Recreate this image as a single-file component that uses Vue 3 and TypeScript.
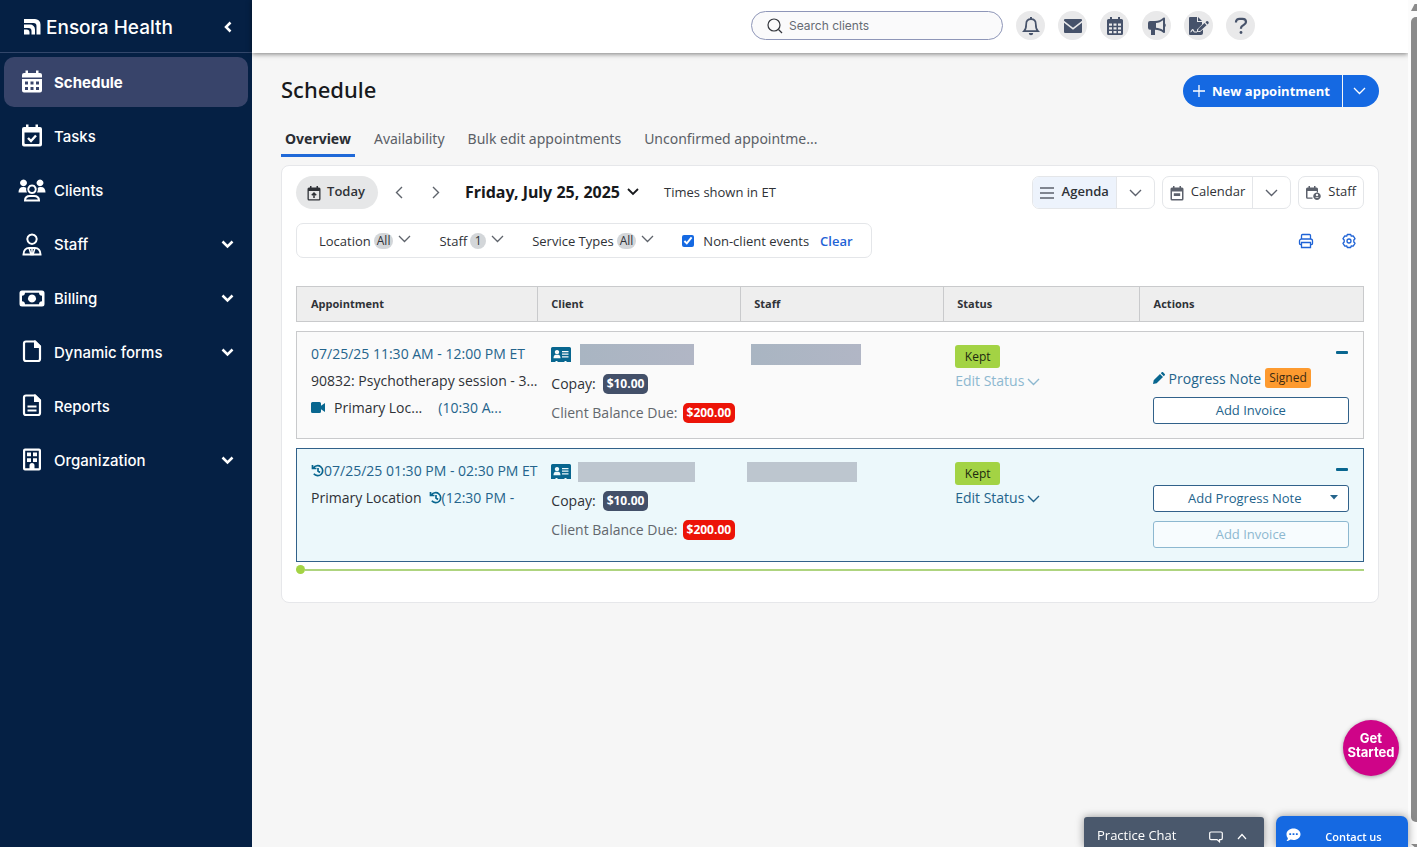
<script setup lang="ts">
import { ref } from 'vue'

interface Shape {
  d: string
  stroke?: number
}

interface NavItem {
  label: string
  expandable?: boolean
  shapes: Shape[]
}

interface Appointment {
  id: number
  time: string
  service?: string
  place: string
  altTime: string
  video?: boolean
  recurring?: boolean
  current?: boolean
  signed?: boolean
}

const navItems: NavItem[] = [
  {
    label: 'Schedule',
    shapes: [
      {
        d: 'M7.5 0.500h2.500v2.500h8V0.500h2.500v2.500H22a2 2 0 0 1 2 2V7.500H4V5a2 2 0 0 1 2-2h1.500zM4 9h20V20.500a2 2 0 0 1-2 2H6a2 2 0 0 1-2-2zM7 11.500v3h3v-3zM12.500 11.500v3h3v-3zM18 11.500v3h3v-3zM7 17v3h3v-3zM12.500 17v3h3v-3zM18 17v3h3v-3z',
      },
    ],
  },
  {
    label: 'Tasks',
    shapes: [
      { d: 'M8 .500h2.500v2.500h7V.500H20v2.500h2a2 2 0 0 1 2 2V20.500a2 2 0 0 1-2 2H6a2 2 0 0 1-2-2V5a2 2 0 0 1 2-2h2zM6.500 8.500v10.500a1 1 0 0 0 1 1h13a1 1 0 0 0 1-1V8.500z' },
      { d: 'M10 14l3 3 5-5.500', stroke: 2.4 },
    ],
  },
  {
    label: 'Clients',
    shapes: [
      { d: 'M5.500 1.500a3.400 3.400 0 1 0 .01 0zM22 1.500a3.400 3.400 0 1 0 .01 0zM.500 14.500c0-3.500 1.500-5.500 4.500-5.500 1.500 0 2.500.3 3.300 1-.4 1.700-.1 3.200.7 4.500zM27.500 14.500c0-3.500-1.500-5.500-4.500-5.500-1.500 0-2.500.3-3.300 1 .4 1.700.1 3.200-.7 4.500z' },
      { d: 'M14 7.500a3.800 3.800 0 1 0 .01 0zM7 22.500c0-3.500 2.500-4.500 5-4.500h4c2.500 0 5 1 5 4.500z', stroke: 2 },
    ],
  },
  {
    label: 'Staff',
    expandable: true,
    shapes: [
      { d: 'M14 2.500a4.700 4.700 0 1 0 .01 0zM5.500 22.500c0-4 2.500-6.500 5.500-6.500h6c3 0 5.500 2.500 5.500 6.500z', stroke: 2 },
      { d: 'M11 16l2 6.500h2l2-6.500M14 15.500v7', stroke: 1.5 },
    ],
  },
  {
    label: 'Billing',
    expandable: true,
    shapes: [
      { d: 'M4 4.500h20a2.500 2.500 0 0 1 2.500 2.500v11a2.500 2.500 0 0 1-2.500 2.500H4A2.500 2.500 0 0 1 1.500 18V7A2.500 2.500 0 0 1 4 4.500zM7 6.700c0 2-1.200 3-3 3v5.600c1.800 0 3 1 3 3h14c0-2 1.200-3 3-3V9.700c-1.800 0-3-1-3-3zM14 8.500a4 4 0 1 1-.01 0z' },
    ],
  },
  {
    label: 'Dynamic forms',
    expandable: true,
    shapes: [
      { d: 'M8 1.500H17l5 5v12.500a2 2 0 0 1-2 2H8a2 2 0 0 1-2-2v-15.500A2 2 0 0 1 8 1.500z', stroke: 2.2 },
      { d: 'M16 .500h1.500L23 6V8h-7z' },
    ],
  },
  {
    label: 'Reports',
    shapes: [
      { d: 'M8 1.500H17l5 5v12.500a2 2 0 0 1-2 2H8a2 2 0 0 1-2-2v-15.500A2 2 0 0 1 8 1.500zM9.500 12.500h9M9.500 16.500h9', stroke: 2.2 },
      { d: 'M16 .500h1.500L23 6V8h-7z' },
    ],
  },
  {
    label: 'Organization',
    expandable: true,
    shapes: [
      { d: 'M7 0.500h14a2 2 0 0 1 2 2v18a2 2 0 0 1-2 2H7a2 2 0 0 1-2-2v-18a2 2 0 0 1 2-2zM7.200 2.700v17.600H11.500V17.500a2.500 2.500 0 0 1 5 0v2.800h4.300V2.700z' },
      { d: 'M9 4.500h4v3.800H9zM15 4.500h4v3.800h-4zM9 10.300h4v3.800H9zM15 10.300h4v3.800h-4z' },
    ],
  },
]

const tabs = ['Overview', 'Availability', 'Bulk edit appointments', 'Unconfirmed appointme...']
const columns = ['Appointment', 'Client', 'Staff', 'Status', 'Actions']
const filters = [
  { label: 'Location', count: 'All' },
  { label: 'Staff', count: '1' },
  { label: 'Service Types', count: 'All' },
]

const appointments: Appointment[] = [
  {
    id: 1,
    time: '07/25/25 11:30 AM - 12:00 PM ET',
    service: '90832: Psychotherapy session - 3...',
    place: 'Primary Loc...',
    altTime: '(10:30 A...',
    video: true,
    signed: true,
  },
  {
    id: 2,
    time: '07/25/25 01:30 PM - 02:30 PM ET',
    place: 'Primary Location',
    altTime: '(12:30 PM -',
    recurring: true,
    current: true,
  },
]

const activeNav = ref('Schedule')
const activeTab = ref('Overview')
const nonClient = ref(true)
const search = ref('')
</script>

<template>
  <div class="app">
    <aside class="sidebar">
      <div class="brand">
        <svg class="brand-mark" viewBox="0 0 17 16" width="17" height="16">
          <path d="M0 0h11a5.500 5.500 0 0 1 5.500 5.500V15.500h-4V7A3 3 0 0 0 9.500 4H0z" />
          <path d="M0 5.500h6a5 5 0 0 1 5 5v5H7.500v-3.500A3 3 0 0 0 4.500 9H0z" />
          <path d="M0 10.500h2.500a3 3 0 0 1 3 3v2H0z" />
        </svg>
        <span class="brand-name">Ensora Health</span>
        <button class="collapse" type="button" aria-label="Collapse menu">
          <svg viewBox="0 0 10 12" width="10" height="12"><path d="M7.500 1.500L3 6l4.500 4.500" /></svg>
        </button>
      </div>
      <nav class="nav">
        <button
          v-for="item in navItems"
          :key="item.label"
          type="button"
          class="nav-item"
          :class="{ active: item.label === activeNav }"
          @click="activeNav = item.label"
        >
          <svg class="nav-icon" viewBox="0 0 28 24" width="28" height="24">
            <path
              v-for="(shape, i) in item.shapes"
              :key="i"
              :d="shape.d"
              fill-rule="evenodd"
              :fill="shape.stroke ? 'none' : 'currentColor'"
              :stroke="shape.stroke ? 'currentColor' : 'none'"
              :stroke-width="shape.stroke"
            />
          </svg>
          <span class="nav-label">{{ item.label }}</span>
          <svg v-if="item.expandable" class="nav-arrow" viewBox="0 0 13 9" width="13" height="9">
            <path d="M1.500 1.500l5 5 5-5" />
          </svg>
        </button>
      </nav>
    </aside>

    <div class="page">
      <header class="topbar">
        <label class="search">
          <svg viewBox="0 0 16 16" width="16" height="16">
            <circle cx="7" cy="7" r="6" />
            <path d="M11.500 11.500L15 15" />
          </svg>
          <input v-model="search" type="text" placeholder="Search clients" aria-label="Search clients" />
        </label>
        <button class="round" type="button" aria-label="Notifications">
          <svg viewBox="0 0 18 20" width="18" height="20">
            <path class="line" d="M2 15.200h14c-1.800-1.800-2.200-3.500-2.200-7 0-3-1.800-5-4.800-5s-4.800 2-4.800 5c0 3.500-.4 5.200-2.200 7z" />
            <path d="M8 1h2v2H8zM6.800 17h4.400a2.200 2.200 0 0 1-4.400 0z" />
          </svg>
        </button>
        <button class="round" type="button" aria-label="Messages">
          <svg viewBox="0 0 20 16" width="20" height="16">
            <path d="M2 1h16a1 1 0 0 1 1 1v.8l-9 7-9-7V2a1 1 0 0 1 1-1zM1 4.800l9 7 9-7V14a1 1 0 0 1-1 1H2a1 1 0 0 1-1-1z" />
          </svg>
        </button>
        <button class="round" type="button" aria-label="Calendar">
          <svg viewBox="0 0 18 20" width="18" height="20">
            <path
              fill-rule="evenodd"
              d="M4 1h2v2h6V1h2v2h1.500A1.500 1.500 0 0 1 17 4.500v13a1.500 1.500 0 0 1-1.500 1.500h-13A1.500 1.500 0 0 1 1 17.500v-13A1.500 1.500 0 0 1 2.500 3H4zM3 7.500v2.200h3V7.500zM7.500 7.500v2.200h3V7.500zM12 7.500v2.200h3V7.500zM3 11.200v2.200h3v-2.200zM7.500 11.200v2.200h3v-2.200zM12 11.200v2.200h3v-2.200zM3 15v2.200h3V15zM7.500 15v2.200h3V15zM12 15v2.200h3V15z"
            />
          </svg>
        </button>
        <button class="round" type="button" aria-label="Announcements">
          <svg viewBox="0 0 20 20" width="20" height="20">
            <path
              fill-rule="evenodd"
              d="M17 1.500c.6 0 1 .4 1 1v5c1 .3 1 3.200 0 3.500v5c0 1-1 1.300-1.700.8C13.500 14.500 11.500 14 8 13.800V19H4v-5.200H3a2 2 0 0 1-2-2V7a2 2 0 0 1 2-2h5c3.500 0 5.800-1 8.300-3.200zM9 7v4.800c2.500.2 4.800.8 7 2.200V4.300C14 6 11.500 6.800 9 7z"
            />
          </svg>
        </button>
        <button class="round" type="button" aria-label="Sign documents">
          <svg viewBox="0 0 22 20" width="22" height="20">
            <path d="M2 1h7v5h5v2.500l-5 5V16h3l3-2.500V17a2 2 0 0 1-2 2H2a1 1 0 0 1-1-1V2a1 1 0 0 1 1-1zM10 1l4 4h-4z" />
            <path d="M10.500 12.500l6-5.500 2 2.200-6 5.500-2.600.6zM17.500 6.200l1-1c1-.7 3 1 2 2.200l-1 1z" />
            <path class="scribble" d="M2.500 16c1 0 1.500-2.500 2.200-2.500S5.500 16 6.500 16H9" />
          </svg>
        </button>
        <button class="round" type="button" aria-label="Help">
          <svg viewBox="0 0 14 18" width="14" height="18">
            <path class="thick" d="M2 5.500V5c0-2 1.500-3.200 3.500-3.200h3C10.500 1.800 12 3 12 5c0 3-5 3.200-5 6v.8" />
            <circle cx="7" cy="15.500" r="1.400" />
          </svg>
        </button>
      </header>

      <main class="content">
        <div class="title-row">
          <h1>Schedule</h1>
          <div class="new-group">
            <button class="new-main" type="button">
              <svg viewBox="0 0 12 12" width="12" height="12"><path d="M6 0v12M0 6h12" /></svg>
              New appointment
            </button>
            <button class="new-more" type="button" aria-label="More appointment options">
              <svg viewBox="0 0 13 8" width="13" height="8"><path d="M1 1l5.500 5.500L12 1" /></svg>
            </button>
          </div>
        </div>

        <div class="tabs" role="tablist">
          <button
            v-for="tab in tabs"
            :key="tab"
            type="button"
            role="tab"
            :aria-selected="tab === activeTab"
            :class="{ active: tab === activeTab }"
            @click="activeTab = tab"
          >
            {{ tab }}
          </button>
        </div>

        <section class="card">
          <div class="toolbar">
            <button class="today" type="button">
              <svg viewBox="0 0 14 16" width="14" height="16">
                <path fill-rule="evenodd" d="M3 1h1.500v1.500h5V1H11v1.500h1A1.500 1.500 0 0 1 13.500 4v10a1.500 1.500 0 0 1-1.500 1.500H2A1.500 1.500 0 0 1 .500 14V4A1.500 1.500 0 0 1 2 2.500h1zM1.800 6v8.200h10.400V6z" />
                <path class="line" d="M7 13V8.500M4.800 10.200L7 8l2.200 2.200" />
              </svg>
              <span class="caption">Today</span>
            </button>
            <button class="step" type="button" aria-label="Previous day">
              <svg viewBox="0 0 8 13" width="8" height="13"><path d="M7 1L1.500 6.500 7 12" /></svg>
            </button>
            <button class="step" type="button" aria-label="Next day">
              <svg viewBox="0 0 8 13" width="8" height="13"><path d="M1 1l5.500 5.500L1 12" /></svg>
            </button>
            <button class="date" type="button">
              Friday, July 25, 2025
              <svg viewBox="0 0 12 8" width="12" height="8"><path d="M1 1l5 5 5-5" /></svg>
            </button>
            <span class="zone">Times shown in ET</span>
            <div class="views">
              <div class="view on">
                <button class="view-main" type="button">
                  <svg viewBox="0 0 14 14" width="14" height="14"><path class="line" d="M0 2h14M0 7h14M0 12h14" /></svg>
                  <span class="caption">Agenda</span>
                </button>
                <button class="view-more" type="button" aria-label="Agenda options">
                  <svg viewBox="0 0 13 8" width="13" height="8"><path class="line" d="M1 1l5.500 5.500L12 1" /></svg>
                </button>
              </div>
              <div class="view">
                <button class="view-main" type="button">
                  <svg viewBox="0 0 14 16" width="14" height="16">
                    <path fill-rule="evenodd" d="M3 1h1.500v1.500h5V1H11v1.500h1A1.500 1.500 0 0 1 13.500 4v10a1.500 1.500 0 0 1-1.500 1.500H2A1.500 1.500 0 0 1 .500 14V4A1.500 1.500 0 0 1 2 2.500h1zM2 6.500V14h10V6.500zM3.800 8.200h6.400v2.800H3.800z" />
                  </svg>
                  <span class="caption">Calendar</span>
                </button>
                <button class="view-more" type="button" aria-label="Calendar options">
                  <svg viewBox="0 0 13 8" width="13" height="8"><path class="line" d="M1 1l5.500 5.500L12 1" /></svg>
                </button>
              </div>
              <div class="view">
                <button class="view-main" type="button">
                  <svg viewBox="0 0 15 14" width="15" height="14">
                    <path fill-rule="evenodd" d="M2.500 0H4v1.500h4V0h1.500v1.500h1A1.500 1.500 0 0 1 12 3v3.500h-1.200V5H1.500v6.500h5v1.300h-5A1.500 1.500 0 0 1 0 11.300V3a1.500 1.500 0 0 1 1.500-1.500h1z" />
                    <path fill-rule="evenodd" d="M11 6.500a3.700 3.700 0 1 1-.01 0zM11 7.800a1.200 1.200 0 1 0 .01 0zM9 11.800h4c-.5-1.200-3.500-1.200-4 0z" />
                  </svg>
                  <span class="caption">Staff</span>
                </button>
              </div>
            </div>
          </div>

          <div class="filter-row">
            <div class="filters">
              <button v-for="filter in filters" :key="filter.label" class="filter" type="button">
                {{ filter.label }}
                <span class="count">{{ filter.count }}</span>
                <svg viewBox="0 0 13 8" width="13" height="8"><path d="M1 1l5.500 5.500L12 1" /></svg>
              </button>
              <label class="check">
                <input v-model="nonClient" type="checkbox" />
                Non-client events
              </label>
              <button class="clear" type="button">Clear</button>
            </div>
            <div class="tools">
              <button type="button" aria-label="Print">
                <svg viewBox="0 0 16 16" width="16" height="16">
                  <path d="M3.500 6V2.500a1 1 0 0 1 1-1h7a1 1 0 0 1 1 1V6M3.500 11.500h-1a1 1 0 0 1-1-1V8a2 2 0 0 1 2-2h9a2 2 0 0 1 2 2v2.500a1 1 0 0 1-1 1h-1M3.500 9.500h9v5h-9z" />
                </svg>
              </button>
              <button type="button" aria-label="Settings">
                <svg viewBox="0 0 16 16" width="16" height="16">
                  <path d="M6.300 1.500h3.400l.6 1.700 1.900-.4 1.800 2.900L12.800 7v2l1.200 1.300-1.800 2.900-1.900-.4-.6 1.700H6.300l-.6-1.700-1.900.4L2 10.300 3.200 9V7L2 5.700l1.800-2.900 1.900.4z" stroke-linejoin="round" />
                  <circle cx="8" cy="8" r="2" />
                </svg>
              </button>
            </div>
          </div>

          <table class="agenda">
            <thead>
              <tr>
                <th v-for="column in columns" :key="column" scope="col">{{ column }}</th>
              </tr>
            </thead>
            <tbody>
              <tr v-for="row in appointments" :key="row.id" :class="{ current: row.current }">
                <td class="when">
                  <div class="line-row">
                    <svg v-if="row.recurring" class="history" viewBox="0 0 13 13" width="13" height="13">
                      <path d="M2.500 4A5 5 0 1 1 2.800 9.800M1.500 1v3.500H5.500M7 4v3l2 1.500" />
                    </svg>
                    <a href="#">{{ row.time }}</a>
                  </div>
                  <div v-if="row.service" class="line-row">{{ row.service }}</div>
                  <div class="line-row place" :class="{ spaced: row.video }">
                    <svg v-if="row.video" class="video" viewBox="0 0 15 11" width="15" height="11">
                      <path d="M1.500 0h7A1.500 1.500 0 0 1 10 1.500v2.300L14 1v9l-4-2.800v2.300A1.500 1.500 0 0 1 8.500 11h-7A1.500 1.500 0 0 1 0 9.500v-8A1.500 1.500 0 0 1 1.500 0z" />
                    </svg>
                    <span>{{ row.place }}</span>
                    <span class="alt">
                      <svg v-if="row.recurring" class="history" viewBox="0 0 13 13" width="13" height="13">
                        <path d="M2.500 4A5 5 0 1 1 2.800 9.800M1.500 1v3.500H5.500M7 4v3l2 1.500" />
                      </svg>
                      <a href="#">{{ row.altTime }}</a>
                    </span>
                  </div>
                </td>
                <td class="client">
                  <div class="client-line">
                    <svg class="id-card" viewBox="0 0 20 15" width="20" height="15">
                      <path
                        fill-rule="evenodd"
                        d="M1.500 0h17A1.500 1.500 0 0 1 20 1.500V15h-4.500v-1h-2v1h-7v-1h-2v1H0V1.500A1.500 1.500 0 0 1 1.500 0zM6 3a2.200 2.200 0 1 0 .01 0zM2.500 11.200h7c0-2.500-1.200-3.700-2.200-3.500-.8.500-1.800.5-2.600 0-1-.2-2.200 1-2.200 3.500zM11 4v1.200h6.500V4zM11 6.600v1.200h6.500V6.600zM11 9.200v1.200h6.500V9.200z"
                      />
                    </svg>
                    <span class="masked" :class="{ light: row.current }"></span>
                  </div>
                  <div class="client-line">Copay: <span class="amount">$10.00</span></div>
                  <div class="client-line muted">Client Balance Due: <span class="amount due">$200.00</span></div>
                </td>
                <td class="staff">
                  <div class="client-line"><span class="masked" :class="{ light: row.current }"></span></div>
                </td>
                <td class="status">
                  <span class="kept">Kept</span>
                  <button class="edit" type="button" :disabled="row.signed">
                    Edit Status
                    <svg viewBox="0 0 13 8" width="13" height="8"><path d="M1 1l5.500 5.500L12 1" /></svg>
                  </button>
                </td>
                <td class="actions">
                  <div class="stack">
                    <button class="minimize" type="button" aria-label="Collapse row"></button>
                    <div v-if="row.signed" class="note">
                      <svg viewBox="0 0 12 12" width="12" height="12">
                        <path d="M0 12l.7-3.700L7 2l3 3-6.300 6.300zM7.800 1.200L8.700.3a1 1 0 0 1 1.400 0l1.600 1.600a1 1 0 0 1 0 1.400l-.9.9z" />
                      </svg>
                      <a href="#">Progress Note</a>
                      <span class="signed">Signed</span>
                    </div>
                    <button v-else class="outline split" type="button">
                      <span>Add Progress Note</span>
                      <svg viewBox="0 0 8 5" width="8" height="5"><path d="M0 0h8L4 4.500z" /></svg>
                    </button>
                    <button class="outline" type="button" :disabled="row.current">Add Invoice</button>
                  </div>
                </td>
              </tr>
            </tbody>
          </table>
          <div class="now-line"></div>
        </section>
      </main>
    </div>

    <div class="scroll" aria-hidden="true">
      <span class="arrow up"></span>
      <span class="thumb"></span>
      <span class="arrow down"></span>
    </div>

    <button class="get-started" type="button">Get<br />Started</button>
    <div class="docks">
      <button class="dock chat" type="button">
        <span>Practice Chat</span>
        <svg viewBox="0 0 14 12" width="14" height="12">
          <path d="M2 1h10a1.300 1.300 0 0 1 1.300 1.300v5A1.300 1.300 0 0 1 12 8.600h-1.500v2.200L8 8.600H2A1.300 1.300 0 0 1 .7 7.300v-5A1.300 1.300 0 0 1 2 1z" />
        </svg>
        <svg viewBox="0 0 10 7" width="10" height="7"><path d="M1 6l4-4.500L9 6" /></svg>
      </button>
      <button class="dock contact" type="button">
        <svg viewBox="0 0 15 14" width="15" height="14">
          <path fill-rule="evenodd" d="M7.500.500c4 0 7 2.500 7 5.700s-3 5.800-7 5.800c-1 0-2-.2-2.900-.5C3.600 12.300 2 13 .500 13c.8-.8 1.300-1.800 1.400-2.800C1 9.100.500 7.700.500 6.200.500 3 3.500.500 7.500.500zM3.300 5.300v1.800h1.800V5.300zM6.600 5.300v1.800h1.800V5.300zM9.900 5.300v1.800h1.800V5.300z" />
        </svg>
        <span>Contact us</span>
      </button>
    </div>
  </div>
</template>

<style>
body {
  margin: 0;
  background: #f6f6f6;
}
</style>

<style scoped>
* {
  box-sizing: border-box;
}

.app {
  display: flex;
  min-height: 100vh;
  font-family: 'Open Sans', 'Noto Sans', sans-serif;
  font-size: 14px;
  color: #2f3237;
}

button {
  margin: 0;
  padding: 0;
  border: 0;
  background: none;
  color: inherit;
  font: inherit;
  cursor: pointer;
}

svg {
  flex: none;
  fill: currentColor;
}

a {
  color: #24648c;
  text-decoration: none;
}

/* Sidebar */
.sidebar {
  flex: none;
  width: 252px;
  background: #052044;
  color: #fff;
  font-family: Inter, sans-serif;
}

.brand {
  display: flex;
  align-items: center;
  height: 53px;
  padding: 2px 19px 0 24px;
  border-bottom: 1px solid #33476b;
}

.brand-name {
  flex: 1;
  margin-left: 5px;
  font-size: 19px;
  font-weight: 500;
}

.collapse svg,
.nav-arrow {
  fill: none;
  stroke: currentColor;
  stroke-width: 2.5;
}

.nav {
  display: flex;
  flex-direction: column;
  gap: 4px;
  padding: 4px;
}

.nav-item {
  display: flex;
  align-items: center;
  gap: 8px;
  height: 50px;
  padding: 0 14px;
  border-radius: 10px;
  font-size: 15px;
  font-weight: 500;
  text-align: left;
}

.nav-item.active {
  background: #38446a;
  font-weight: 700;
}

.nav-label {
  flex: 1;
}

/* Top bar */
.page {
  flex: 1;
  min-width: 0;
}

.topbar {
  display: flex;
  align-items: center;
  justify-content: flex-end;
  gap: 13px;
  height: 53px;
  padding: 0 153px 2px 0;
  background: #fff;
  box-shadow: 0 1px 5px rgba(0, 0, 0, 0.5);
}

.search {
  display: flex;
  align-items: center;
  gap: 6px;
  width: 252px;
  height: 29px;
  padding: 0 15px;
  border: 1px solid #8e96b8;
  border-radius: 15px;
  background: #fafafb;
}

.search svg {
  fill: none;
  stroke: #33363c;
  stroke-width: 1.2;
}

.search input {
  flex: 1;
  min-width: 0;
  padding: 0;
  border: 0;
  outline: 0;
  background: none;
  font-family: Inter, sans-serif;
  font-size: 12px;
}

.search input::placeholder {
  color: #666b73;
  opacity: 1;
}

.round {
  display: flex;
  flex: none;
  align-items: center;
  justify-content: center;
  width: 29px;
  height: 29px;
  border-radius: 50%;
  background: #e9e9ea;
  color: #46526a;
}

.round .line,
.round .thick {
  fill: none;
  stroke: currentColor;
  stroke-width: 1.7;
}

.round .thick {
  stroke-width: 2.2;
}

.round .scribble {
  fill: none;
  stroke: #e9e9ea;
  stroke-width: 1.2;
}

/* Content */
.content {
  padding: 22px 29px 0;
}

.title-row {
  display: flex;
  align-items: flex-start;
  justify-content: space-between;
  height: 32px;
}

h1 {
  margin: 0;
  font-family: 'Noto Sans', sans-serif;
  font-size: 22px;
  font-weight: 500;
  line-height: 28px;
  color: #17191c;
}

.new-group {
  display: flex;
  gap: 1px;
  color: #fff;
}

.new-group svg {
  fill: none;
  stroke: currentColor;
  stroke-width: 1.3;
}

.new-main,
.new-more {
  display: flex;
  align-items: center;
  justify-content: center;
  height: 32px;
  background: #1569e2;
}

.new-main {
  gap: 7px;
  width: 159px;
  padding: 0 2px 1px 0;
  border-radius: 16px 0 0 16px;
  font-size: 13px;
  font-weight: 700;
}

.new-more {
  width: 36px;
  padding-right: 4px;
  border-radius: 0 16px 16px 0;
}

.tabs {
  display: flex;
  gap: 15px;
  margin: 15px 0 8px;
  font-family: 'Noto Sans', sans-serif;
}

.tabs button {
  height: 35px;
  padding: 0 4px;
  border-bottom: 3px solid transparent;
  color: #5b5f66;
}

.tabs button.active {
  border-color: #1f69d8;
  font-weight: 700;
  color: #2a2d33;
}

.card {
  padding: 10px 14px 28px;
  border: 1px solid #e6e7ea;
  border-radius: 8px;
  background: #fff;
}

.toolbar {
  display: flex;
  align-items: center;
  height: 33px;
}

.caption {
  padding-bottom: 3px;
}

.today {
  display: flex;
  align-items: center;
  justify-content: center;
  gap: 6px;
  width: 82px;
  height: 33px;
  padding-right: 2px;
  border-radius: 17px;
  background: #e6e7e8;
  font-size: 13px;
  font-weight: 600;
}

.today .line {
  fill: none;
  stroke: currentColor;
  stroke-width: 1.5;
}

.step {
  display: flex;
  align-items: center;
  justify-content: center;
  width: 37px;
  height: 33px;
}

.step:nth-of-type(2) {
  margin-left: 2px;
}

.step svg {
  fill: none;
  stroke: #5e636b;
  stroke-width: 1.4;
}

.date {
  display: flex;
  align-items: center;
  gap: 7px;
  margin-left: 11px;
  padding-bottom: 2px;
  font-family: 'Noto Sans', sans-serif;
  font-size: 16px;
  font-weight: 700;
  color: #17191c;
}

.date svg {
  fill: none;
  stroke: currentColor;
  stroke-width: 1.8;
}

.zone {
  margin-left: 25px;
  padding-bottom: 2px;
  font-size: 13px;
}

.views {
  display: flex;
  gap: 7px;
  margin-left: auto;
}

.view {
  display: flex;
  height: 33px;
  border: 1px solid #e4e6e9;
  border-radius: 7px;
  overflow: hidden;
  font-size: 13px;
}

.view svg {
  color: #5c616c;
}

.view .line {
  fill: none;
  stroke: currentColor;
  stroke-width: 1.4;
}

.view-main {
  display: flex;
  align-items: center;
  gap: 7px;
  padding: 0 7px;
}

.view.on .view-main {
  gap: 8px;
  background: #edf3fc;
  font-weight: 600;
}

.view-more {
  display: flex;
  align-items: center;
  justify-content: center;
  width: 38px;
  border-left: 1px solid #e4e6e9;
}

.filter-row {
  display: flex;
  align-items: center;
  justify-content: space-between;
  margin-top: 14px;
}

.filters {
  display: flex;
  align-items: center;
  height: 35px;
  padding: 0 18px 0 22px;
  border: 1px solid #e4e6e9;
  border-radius: 7px;
  font-size: 13px;
}

.filter {
  display: flex;
  align-items: center;
  gap: 3px;
  margin-right: 28px;
}

.filter svg {
  margin: 0 0 4px 2px;
  fill: none;
  stroke: #5e636b;
  stroke-width: 1.3;
}

.count {
  min-width: 16px;
  padding: 0 3px;
  border-radius: 8px;
  background: #d3d6d9;
  font-size: 12px;
  line-height: 16px;
  text-align: center;
}

.check {
  display: flex;
  align-items: center;
  gap: 9px;
}

.check input {
  width: 12px;
  height: 12px;
  margin: 0;
  accent-color: #1569e2;
}

.clear {
  margin-left: 11px;
  font-weight: 600;
  color: #1f63d6;
}

.tools {
  display: flex;
  gap: 27px;
  padding-right: 7px;
}

.tools button {
  display: flex;
}

.tools svg {
  fill: none;
  stroke: #1f63d6;
  stroke-width: 1.3;
}

/* Agenda table */
.agenda {
  width: 100%;
  margin-top: 19px;
  border-collapse: separate;
  border-spacing: 0 9px;
  table-layout: fixed;
}

th {
  height: 36px;
  padding: 0 13px 2px;
  border: solid #c9cacc;
  border-width: 1px 0 1px 1px;
  background: #eee;
  font-size: 11px;
  font-weight: 700;
  text-align: left;
}

th:nth-child(1) {
  width: 22.6%;
  padding-left: 14px;
}

th:nth-child(2),
th:nth-child(3) {
  width: 19%;
}

th:nth-child(4) {
  width: 18.3%;
}

th:last-child {
  padding-left: 14px;
  border-right-width: 1px;
}

td {
  padding: 8px 0 11px 14px;
  border: solid #c9cacc;
  border-width: 1px 0;
  background: #fafafa;
  vertical-align: top;
  white-space: nowrap;
}

td:first-child {
  border-left-width: 1px;
}

td:last-child {
  border-right-width: 1px;
}

.current td {
  border-color: #31618a;
  background: #ecf8fb;
}

.line-row {
  display: flex;
  align-items: center;
  height: 27px;
}

.place {
  gap: 7px;
}

.place.spaced {
  gap: 8px;
}

.place.spaced .alt {
  margin-left: 8px;
}

.alt {
  display: flex;
  align-items: center;
}

.video {
  color: #08668f;
}

.history {
  fill: none;
  stroke: #08668f;
  stroke-width: 1.7;
}

.client-line {
  display: flex;
  align-items: center;
  gap: 7px;
  height: 29px;
}

.id-card {
  margin-right: 2px;
  color: #08668f;
}

.masked {
  width: 114px;
  height: 21px;
  background: linear-gradient(90deg, #a9b5c2, #b1b6c5);
}

.masked.light {
  width: 117px;
  height: 20px;
  background: #bdc6cf;
}

.id-card + .masked.light {
  margin-left: -2px;
}

.client {
  padding-left: 14px;
}

.staff {
  padding-left: 11px;
}

.current .staff {
  padding-left: 7px;
}

.staff .masked {
  width: 110px;
}

.muted {
  gap: 5px;
  color: #63676d;
}

.amount {
  padding: 0 4px;
  border-radius: 5px;
  background: #435069;
  font-size: 12px;
  font-weight: 700;
  line-height: 20px;
  color: #fff;
}

.amount.due {
  background: #ec1408;
}

.status {
  padding: 13px 0 0 12px;
}

.kept {
  display: block;
  width: 45px;
  border-radius: 3px;
  background: #a3d344;
  font-size: 12px;
  line-height: 23px;
  text-align: center;
  color: #202a10;
}

.edit {
  display: flex;
  align-items: center;
  gap: 3px;
  height: 24px;
  color: #24648c;
}

.edit svg {
  margin-top: 3px;
  fill: none;
  stroke: currentColor;
  stroke-width: 1.4;
}

.edit:disabled {
  color: #8db8d0;
}

.actions {
  padding: 13px 14px;
}

.stack {
  display: flex;
  flex-direction: column;
  gap: 9px;
}

.minimize {
  display: flex;
  align-items: center;
  align-self: flex-end;
  width: 13px;
  height: 14px;
}

.minimize::before {
  content: '';
  width: 12px;
  height: 3px;
  border-radius: 1px;
  background: #08668f;
}

.note {
  display: flex;
  align-items: center;
  gap: 4px;
  height: 20px;
  color: #08668f;
}

.signed {
  padding: 0 4px;
  border-radius: 3px;
  background: #fd9a2f;
  font-size: 12px;
  line-height: 20px;
  color: #3c2a12;
}

.outline {
  height: 27px;
  padding-bottom: 2px;
  border: 1px solid #31618a;
  border-radius: 3px;
  background: #fff;
  font-size: 13px;
  color: #24648c;
}

.outline:disabled {
  border-color: #8db8d0;
  background: #f7fcfe;
  color: #8db8d0;
}

.split {
  display: flex;
  align-items: center;
  padding: 0 10px 2px 6px;
}

.split span {
  flex: 1;
}

.now-line {
  display: flex;
  align-items: center;
  height: 9px;
  margin-top: -6px;
}

.now-line::before {
  content: '';
  width: 9px;
  height: 9px;
  border-radius: 50%;
  background: #a3d344;
}

.now-line::after {
  content: '';
  flex: 1;
  height: 2px;
  background: #aed47f;
}

/* Page scroll track */
.scroll {
  display: flex;
  flex: none;
  flex-direction: column;
  align-items: flex-end;
  width: 9px;
  height: 100vh;
  padding: 4px 0 0;
  background: #fcfcfc;
}

.thumb {
  flex: 1;
  width: 6px;
  margin: 6px 0 22px;
  border-radius: 5px 0 0 5px;
  background: #8b8b8b;
}

.arrow {
  width: 6px;
  height: 7px;
  background: #8b8b8b;
  clip-path: polygon(0 100%, 60% 0, 100% 0, 100% 100%);
}

.arrow.down {
  height: 3px;
  clip-path: polygon(0 0, 100% 0, 100% 100%, 60% 100%);
}

/* Floating controls */
.get-started {
  position: fixed;
  right: 18px;
  bottom: 71px;
  width: 56px;
  height: 56px;
  padding-bottom: 6px;
  border-radius: 50%;
  background: #cf0488;
  box-shadow: 0 1px 4px rgba(0, 0, 0, 0.35);
  font-family: Inter, sans-serif;
  font-size: 13px;
  font-weight: 700;
  line-height: 14px;
  color: #fff;
}

.docks {
  position: fixed;
  right: 9px;
  bottom: 0;
  display: flex;
  align-items: flex-end;
  gap: 12px;
}

.dock {
  display: flex;
  align-items: center;
  color: #fff;
  box-shadow: 0 0 8px rgba(0, 0, 0, 0.4);
}

.chat {
  gap: 14px;
  width: 180px;
  height: 30px;
  padding: 6px 17px 0 13px;
  border-radius: 3px 3px 0 0;
  background: #4a586c;
  font-size: 13px;
}

.chat span {
  flex: 1;
  text-align: left;
}

.chat svg {
  margin-top: 3px;
  fill: none;
  stroke: currentColor;
  stroke-width: 1.2;
}

.contact {
  width: 132px;
  height: 31px;
  padding: 6px 10px 0;
  border-radius: 7px 7px 0 0;
  background: #1569e2;
  font-size: 11px;
  font-weight: 600;
}

.contact span {
  flex: 1;
  padding: 4px 0 0 8px;
}
</style>
